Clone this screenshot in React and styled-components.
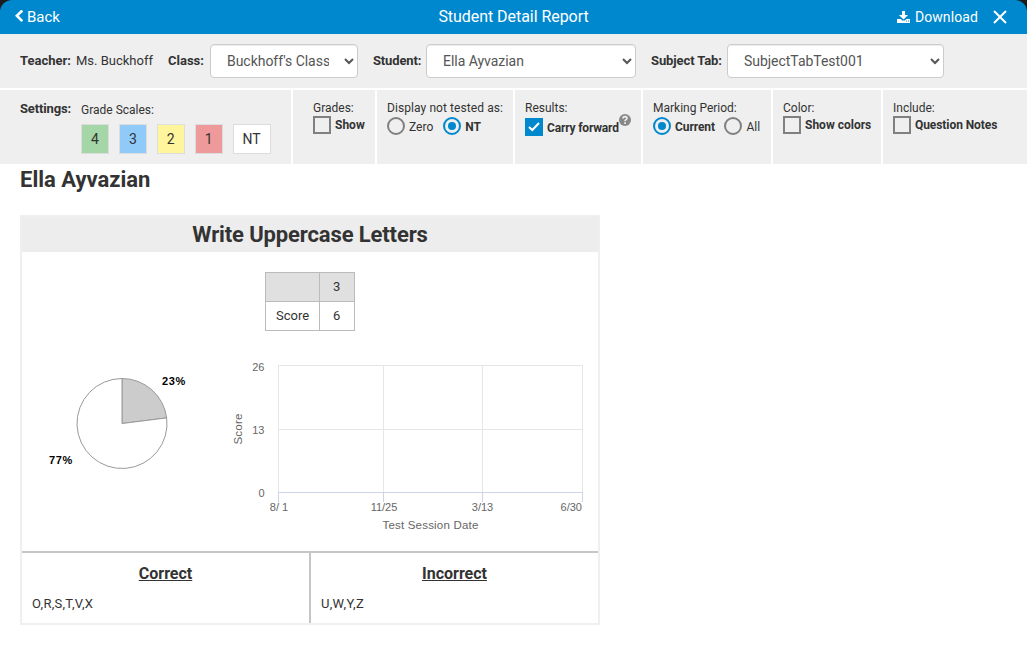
import React from "react";
import styled, { createGlobalStyle, css } from "styled-components";

const GlobalStyle = createGlobalStyle`
  *, *::before, *::after { box-sizing: border-box; }
  body {
    margin: 0;
    background: #fff;
    color: #333;
    font-family: Roboto, "Liberation Sans", sans-serif;
    font-size: 13px;
    line-height: 18px;
  }
`;

const Page = styled.div`
  height: 645px;
  overflow: hidden;
  background: linear-gradient(#1c1c1c 34px, #fff 34px);
`;

const Header = styled.header`
  display: grid;
  grid-template-columns: 1fr auto 1fr;
  align-items: center;
  height: 34px;
  padding: 0 20px 0 15px;
  border-radius: 12px 12px 0 0;
  background: #0088ce;
  color: #fff;
`;

const Title = styled.h1`
  margin: 0;
  padding-left: 1px;
  font-size: 16px;
  font-weight: 400;
  letter-spacing: -0.05px;
  line-height: 34px;
  transform: translateX(2px);
`;

const BarButton = styled.button`
  display: flex;
  align-items: center;
  gap: ${(p) => p.$gap}px;
  padding: 0;
  border: 0;
  background: none;
  color: inherit;
  font: inherit;
  font-size: ${(p) => p.$size}px;
  letter-spacing: ${(p) => p.$spacing || 0}px;
  line-height: 34px;
`;

const Actions = styled.div`
  display: flex;
  justify-content: flex-end;
  align-items: center;
  gap: 15px;
`;

const Filters = styled.div`
  display: flex;
  align-items: center;
  height: 56px;
  padding: 0 20px;
  border-bottom: 2px solid #fff;
  background: #efefef;
`;

const Field = styled.label`
  display: flex;
  align-items: center;
  gap: 5px;
  margin-right: 15px;
  white-space: nowrap;
`;

const Name = styled.b`
  flex: none;
  width: ${(p) => (p.$width ? `${p.$width}px` : "auto")};
  font-weight: 700;
  letter-spacing: ${(p) => p.$spacing || 0}px;
`;

const Select = styled.select`
  width: ${(p) => p.$width}px;
  height: 34px;
  padding: 6px 12px;
  border: 1px solid #ccc;
  border-radius: 4px;
  background: #fff;
  box-shadow: inset 0 1px 1px rgba(0, 0, 0, 0.075);
  color: #555;
  font: inherit;
  font-size: 14px;
  letter-spacing: -0.03px;
  line-height: 20px;
`;

const Settings = styled.div`
  display: flex;
  height: 74px;
  background: #efefef;
`;

const Scales = styled.div`
  display: flex;
  gap: 10px;
  width: 291px;
  padding: 10px 0 0 20px;
`;

const ScaleGroup = styled.div`
  padding-top: 1px;
  font-size: 12px;
`;

const ScaleList = styled.div`
  display: flex;
  gap: 10px;
  margin-top: 6px;
`;

const Scale = styled.span`
  height: 30px;
  padding: 0 9px;
  border: 1px solid #ddd;
  background: ${(p) => p.$color};
  font-size: 14px;
  line-height: 29px;
`;

const Setting = styled.div`
  width: ${(p) => p.$width};
  padding: 9px 0 0 ${(p) => p.$indent || 10}px;
  border-left: 2px solid #fff;
  font-size: 12px;
  white-space: nowrap;
`;

const Caption = styled.div`
  height: 17px;
  letter-spacing: ${(p) => p.$spacing || 0}px;
  line-height: 18px;
`;

const Options = styled.div`
  display: flex;
  gap: ${(p) => p.$gap || 10}px;
  padding-top: ${(p) => p.$top || 0}px;
`;

const Option = styled.span`
  display: flex;
  gap: 4px;
  font-weight: ${(p) => (p.$bold ? 700 : 400)};
  letter-spacing: ${(p) => p.$spacing || 0}px;
  line-height: ${(p) => p.$line || 18}px;
`;

const Check = styled.span`
  display: grid;
  place-items: center;
  width: 18px;
  height: 18px;
  border: 2px solid #808080;
  ${(p) => p.$on && css`
    border-color: #0088ce;
    background: #0088ce;
  `}
`;

const Radio = styled.span`
  display: grid;
  place-items: center;
  width: 18px;
  height: 18px;
  border: 2px solid ${(p) => (p.$on ? "#0088ce" : "#808080")};
  border-radius: 50%;
  &::after {
    content: "";
    width: 8px;
    height: 8px;
    border-radius: 50%;
    background: ${(p) => (p.$on ? "#0088ce" : "transparent")};
  }
`;

const Help = styled.svg`
  width: 12px;
  height: 12px;
  margin: -4px 0 0 -4px;
`;

const Student = styled.h2`
  margin: 0 0 0 20px;
  height: 51px;
  font-size: 22px;
  font-weight: 700;
  line-height: 31px;
`;

const Panel = styled.section`
  width: 580px;
  height: 410px;
  margin-left: 20px;
  border: 2px solid #efefef;
`;

const PanelTitle = styled.h3`
  height: 35px;
  margin: 0;
  background: #ededed;
  font-size: 22px;
  font-weight: 700;
  letter-spacing: -0.13px;
  line-height: 36px;
  text-align: center;
`;

const ScoreTable = styled.table`
  margin: 20px auto 0;
  border-collapse: collapse;
  th, td {
    height: 29px;
    padding: 0 10px;
    border: 1px solid #bbb;
    font-weight: 400;
    text-align: center;
  }
  th { background: #e0e0e0; }
  th:last-child, td:last-child { width: 35px; padding: 0 1px 0 0; }
`;

const Charts = styled.div`
  display: flex;
  height: 220px;
  svg {
    display: block;
    font-family: "Liberation Sans", Arial, sans-serif;
  }
`;

const Answers = styled.div`
  display: grid;
  grid-template-columns: 287px 1fr;
  height: 72px;
  border-top: 2px solid #c5c5c5;
`;

const AnswerColumn = styled.div`
  padding: 11px 10px 0;
  & + & { border-left: 2px solid #c5c5c5; }
`;

const AnswerTitle = styled.h4`
  margin: 0 0 11px;
  font-size: 16px;
  font-weight: 700;
  line-height: 20px;
  text-align: center;
  text-decoration: underline;
`;

const Letters = styled.p`
  margin: 0;
  letter-spacing: 0.27px;
`;

const scales = [
  ["4", "#a5d6a7"],
  ["3", "#90caf9"],
  ["2", "#fff59d"],
  ["1", "#ef9a9a"],
  ["NT", "#fff"],
];

function Pie() {
  return (
    <svg width="200" height="220" viewBox="22 331 200 220">
      <g stroke="#999" strokeWidth="1" strokeLinejoin="round">
        <path d="M122 423.5V378.5A45 45 0 0 1 166.65 417.9Z" fill="#ccc" />
        <path d="M122 423.5L166.65 417.9A45 45 0 1 1 122 378.5Z" fill="#fff" />
      </g>
      <g fontSize="11" fontWeight="700" fill="#000" letterSpacing="0.6">
        <text x="162" y="385">23%</text>
        <text x="49" y="464">77%</text>
      </g>
    </svg>
  );
}

function ScoreChart() {
  return (
    <svg width="376" height="220" viewBox="222 331 376 220">
      <path d="M278 365.5H583M278 429.5H583M278.5 366V492M383.5 366V492M482.5 366V492M582.5 366V492" stroke="#e6e6e6" fill="none" />
      <path d="M278 492.5H583M278.5 492V502M383.5 492V502M482.5 492V502M582.5 492V502" stroke="#ccd6eb" fill="none" />
      <g fontSize="11" fill="#666">
        <text x="264.5" y="371" textAnchor="end">26</text>
        <text x="264.5" y="434" textAnchor="end">13</text>
        <text x="264.5" y="497" textAnchor="end">0</text>
        <text x="279" y="511" textAnchor="middle">8/ 1</text>
        <text x="384" y="511" textAnchor="middle">11/25</text>
        <text x="482.5" y="511" textAnchor="middle">3/13</text>
        <text x="582" y="511" textAnchor="end">6/30</text>
      </g>
      <g fontSize="11.5" fill="#666" textAnchor="middle" letterSpacing="0.2">
        <text x="430.5" y="529">Test Session Date</text>
        <text transform="translate(242 429) rotate(-90)">Score</text>
      </g>
    </svg>
  );
}

export default function App() {
  return (
    <Page>
      <GlobalStyle />
      <Header>
        <BarButton $gap={3} $size={15}>
          <svg width="9" height="14" viewBox="0 0 9 14">
            <path d="M7.3 0.5L1.8 5.8L7.3 11.1" fill="none" stroke="#fff" strokeWidth="2.6" />
          </svg>
          Back
        </BarButton>
        <Title>Student Detail Report</Title>
        <Actions>
          <BarButton $gap={5} $size={14} $spacing={0.1}>
            <svg width="13" height="12" viewBox="0 0 13 12">
              <path d="M5 0H8V4H11L6.5 8.5L2 4H5Z" fill="#fff" />
              <path d="M0 8H3.7L5.2 9.5H7.8L9.3 8H13V12H0Z" fill="#fff" />
              <path d="M9 10H10M11 10H12" stroke="#0088ce" />
            </svg>
            Download
          </BarButton>
          <BarButton aria-label="Close" $gap={0} $size={14}>
            <svg width="14" height="14" viewBox="0 0 14 14">
              <path d="M1 1L13 13M13 1L1 13" stroke="#fff" strokeWidth="2" />
            </svg>
          </BarButton>
        </Actions>
      </Header>

      <Filters>
        <Field as="div"><Name $width={51}>Teacher:</Name><span>Ms. Buckhoff</span></Field>
        <Field>
          <Name $width={37}>Class:</Name>
          <Select $width={148}><option>Buckhoff's Class</option></Select>
        </Field>
        <Field>
          <Name $width={48} $spacing={-0.15}>Student:</Name>
          <Select $width={210}><option>Ella Ayvazian</option></Select>
        </Field>
        <Field>
          <Name $width={71} $spacing={-0.1}>Subject Tab:</Name>
          <Select $width={217}><option>SubjectTabTest001</option></Select>
        </Field>
      </Filters>

      <Settings>
        <Scales>
          <Name $width={51} $spacing={-0.15}>Settings:</Name>
          <ScaleGroup>
            <Caption>Grade Scales:</Caption>
            <ScaleList>
              {scales.map(([label, color]) => <Scale key={label} $color={color}>{label}</Scale>)}
            </ScaleList>
          </ScaleGroup>
        </Scales>
        <Setting $width="84px" $indent={20}>
          <Caption>Grades:</Caption>
          <Options><Option $bold><Check />Show</Option></Options>
        </Setting>
        <Setting $width="138px">
          <Caption $spacing={0.08}>Display not tested as:</Caption>
          <Options $top={1}>
            <Option $line={20}><Radio />Zero</Option>
            <Option $bold $line={20}><Radio $on />NT</Option>
          </Options>
        </Setting>
        <Setting $width="128px">
          <Caption>Results:</Caption>
          <Options $top={2}>
            <Option $bold $line={20} $spacing={-0.17}>
              <Check $on>
                <svg width="12" height="10" viewBox="0 0 12 10">
                  <path d="M1 5L4.3 8L11 1" fill="none" stroke="#fff" strokeWidth="2" />
                </svg>
              </Check>
              Carry forward
              <Help viewBox="0 0 12 12">
                <circle cx="6" cy="6" r="6" fill="#888" />
                <path d="M4 4.6C4 2 8 2 8 4.3C8 5.7 6 5.6 6 7.3M6 8.3V10" fill="none" stroke="#efefef" strokeWidth="1.6" />
              </Help>
            </Option>
          </Options>
        </Setting>
        <Setting $width="130px">
          <Caption>Marking Period:</Caption>
          <Options $top={1} $gap={9.5}>
            <Option $bold $line={20} $spacing={-0.08}><Radio $on />Current</Option>
            <Option $line={20}><Radio />All</Option>
          </Options>
        </Setting>
        <Setting $width="110px">
          <Caption>Color:</Caption>
          <Options><Option $bold><Check />Show colors</Option></Options>
        </Setting>
        <Setting $width="146px">
          <Caption>Include:</Caption>
          <Options><Option $bold $spacing={-0.07}><Check />Question Notes</Option></Options>
        </Setting>
      </Settings>

      <Student>Ella Ayvazian</Student>
      <Panel>
        <PanelTitle>Write Uppercase Letters</PanelTitle>
        <ScoreTable>
          <thead><tr><th /><th>3</th></tr></thead>
          <tbody><tr><td>Score</td><td>6</td></tr></tbody>
        </ScoreTable>
        <Charts>
          <Pie />
          <ScoreChart />
        </Charts>
        <Answers>
          <AnswerColumn>
            <AnswerTitle>Correct</AnswerTitle>
            <Letters>O,R,S,T,V,X</Letters>
          </AnswerColumn>
          <AnswerColumn>
            <AnswerTitle>Incorrect</AnswerTitle>
            <Letters>U,W,Y,Z</Letters>
          </AnswerColumn>
        </Answers>
      </Panel>
    </Page>
  );
}
